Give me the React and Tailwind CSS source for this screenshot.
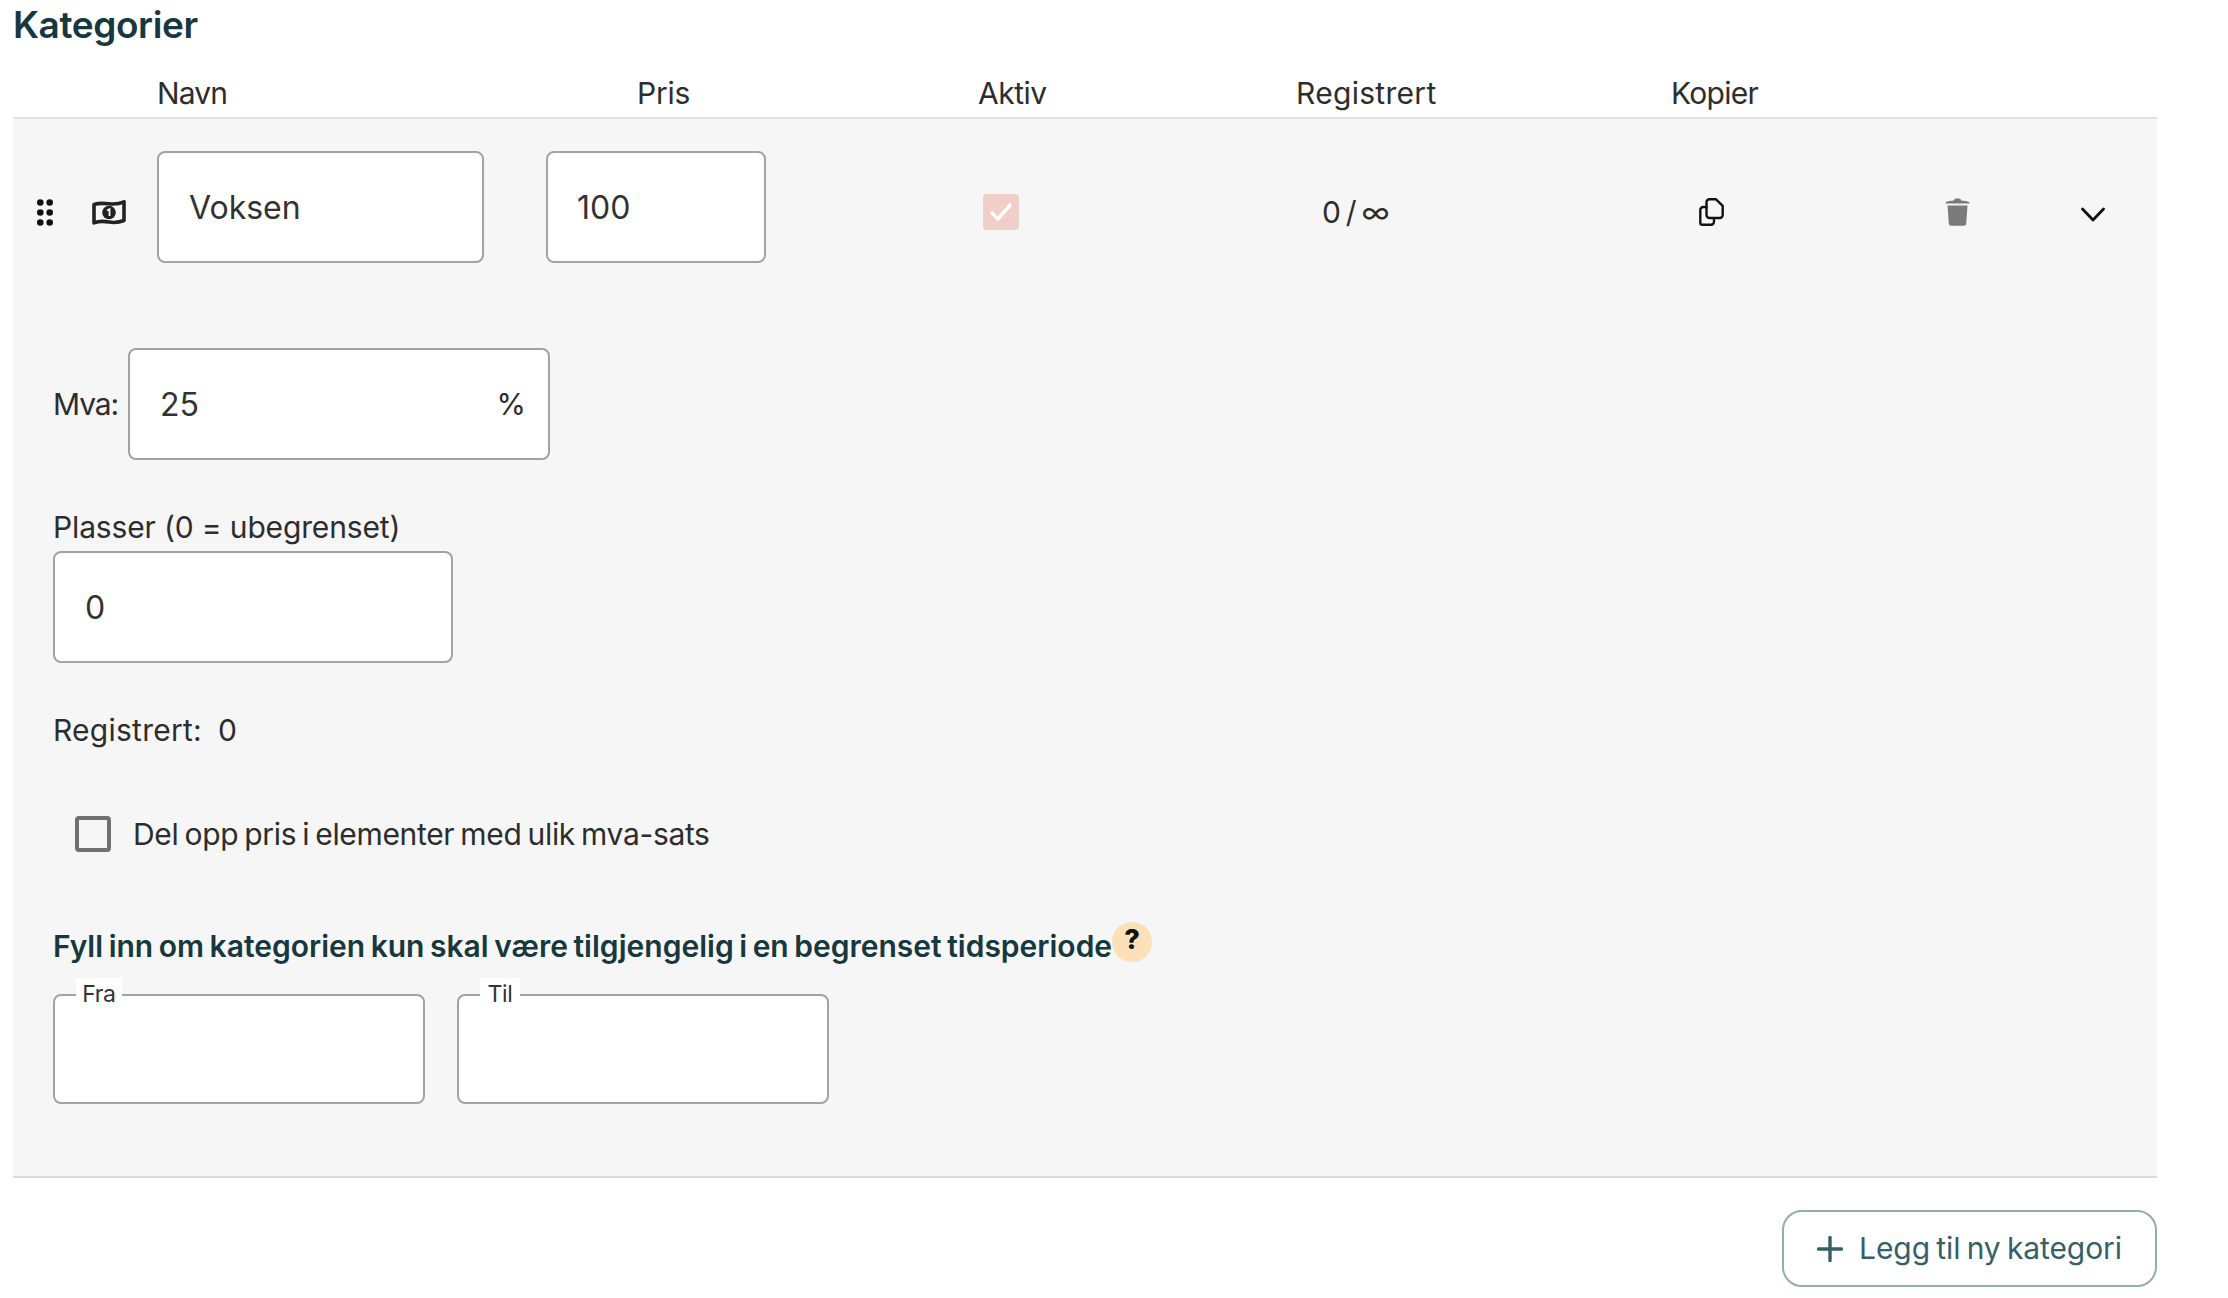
import React from "react";

const inputCls = "block h-[112px] rounded-[8px] border-2 border-[#a3a3a3] bg-white text-[32px] text-[#333] outline-none";

function Dots() {
  return (
    <svg width="16" height="27" viewBox="0 0 16 27" fill="#111">
      {[3.5, 13.5, 23.5].map((y) => (
        <g key={y}>
          <circle cx="3.3" cy={y} r="3.3" />
          <circle cx="12.7" cy={y} r="3.3" />
        </g>
      ))}
    </svg>
  );
}

function Bill() {
  return (
    <svg width="34" height="25" viewBox="0 0 34 25" fill="none">
      <path d="M2 4.500C7 2.800 12 3.200 17 3.800c5 .6 10 .2 15-2v18.700c-5 2-10 2.400-15 1.500-5-.9-10-1-15 .8z" stroke="#222" strokeWidth="3.600" strokeLinejoin="round" fill="#f6f6f6" />
      <circle cx="17" cy="12.500" r="6.800" fill="#222" />
      <path d="M15 10.500l2.500-1.300v6.800" stroke="#f6f6f6" strokeWidth="1.800" />
    </svg>
  );
}

function Copy() {
  return (
    <svg width="25" height="28" viewBox="0 0 25 28" fill="none" stroke="#111" strokeWidth="2.400" strokeLinejoin="round" strokeLinecap="round">
      <path d="M10.500 1.300h6.500l6.700 6.500v9.200a3 3 0 0 1-3 3h-10.200a3 3 0 0 1-3-3V4.300a3 3 0 0 1 3-3z" />
      <path d="M7.500 9H4.300a3 3 0 0 0-3 3v12.700a2 2 0 0 0 2 2h8.700a3 3 0 0 0 3-3v-3.500" />
    </svg>
  );
}

function Trash() {
  return (
    <svg width="25" height="28" viewBox="0 0 25 28" fill="#7a7a7a">
      <path d="M9 2.500C9 1 10 .5 12.500.5S16 1 16 2.500c3 .2 6 .7 8 1.500.8.400.8 1.500 0 1.500H1c-.8 0-.8-1.100 0-1.500 2-.8 5-1.300 8-1.500z" />
      <path d="M2.500 7.500h20l-1.300 18a2.300 2.300 0 0 1-2.300 2.200H6.100a2.300 2.300 0 0 1-2.300-2.200z" />
    </svg>
  );
}

function Chevron() {
  return (
    <svg width="24" height="15" viewBox="0 0 24 15" fill="none" stroke="#111" strokeWidth="2.800" strokeLinecap="round" strokeLinejoin="round">
      <path d="M1.500 2L12 13 22.500 2" />
    </svg>
  );
}

function Check() {
  return (
    <div className="flex h-[36px] w-[36px] items-center justify-center rounded-[4px] bg-[#efcfc8]">
      <svg width="26" height="22" viewBox="0 0 26 22" fill="none" stroke="#fff" strokeWidth="3.500">
        <path d="M3 11l7 7L23 3" />
      </svg>
    </div>
  );
}

function DateField({ label, labelW, className }) {
  return (
    <div className={"relative h-[110px] w-[372px] rounded-[8px] border-2 border-[#a3a3a3] bg-white " + className}>
      <span className={"absolute -top-[18px] left-[21px] h-[32px] bg-white text-center text-[23px] leading-[32px] tracking-[-0.4px] text-[#333] " + labelW}>{label}</span>
    </div>
  );
}

export default function App() {
  return (
    <div className="min-h-[1298px] bg-white pl-[13px] font-['Inter',sans-serif] text-[#2d2d2d]">
      <div className="w-[2144px]">
        <h2 className="h-[50px] text-[37px] leading-[50px] font-semibold tracking-[-0.4px] text-[#17383f]">Kategorier</h2>
        <div className="flex h-[69px] items-center border-b-2 border-[#e2e2e2] pt-[20px] pl-[144px] text-[30px]">
          <span className="w-[480px] tracking-[-0.9px]">Navn</span>
          <span className="w-[341px] tracking-[-0.2px]">Pris</span>
          <span className="w-[318px] tracking-[-0.5px]">Aktiv</span>
          <span className="w-[375px] tracking-[0.3px]">Registrert</span>
          <span className="tracking-[-0.7px]">Kopier</span>
        </div>
        <div className="h-[1059px] border-b-2 border-[#d9d9d9] bg-[#f6f6f6] pt-[32px]">
          <div className="flex items-center">
            <div className="mt-[11px] ml-[24px] flex"><Dots /></div>
            <div className="mt-[11px] ml-[39px] flex"><Bill /></div>
            <input readOnly value="Voksen" className={inputCls + " ml-[31px] w-[327px] pl-[30px]"} />
            <input readOnly value="100" className={inputCls + " ml-[62px] w-[220px] pl-[29px]"} />
            <div className="mt-[10px] ml-[217px]"><Check /></div>
            <span className="mt-[10px] ml-[303px] w-[70px] text-[30px] leading-[36px] tracking-[-0.3px] whitespace-nowrap [word-spacing:-3px]">0 / ∞</span>
            <div className="mt-[10px] ml-[307px] flex"><Copy /></div>
            <div className="mt-[10px] ml-[221px] flex"><Trash /></div>
            <div className="mt-[14px] ml-[111px] flex"><Chevron /></div>
          </div>

          <div className="mt-[85px] flex items-center pl-[40px]">
            <span className="w-[75px] text-[30px] tracking-[-1.1px]">Mva:</span>
            <div className="relative">
              <input readOnly value="25" className={inputCls + " w-[422px] pl-[30px]"} />
              <span className="absolute top-[38px] right-[24px] text-[30px] leading-[36px]">%</span>
            </div>
          </div>

          <div className="mt-[49px] pl-[40px] text-[30px] leading-[36px] tracking-[-0.15px]">Plasser (0 = ubegrenset)</div>
          <input readOnly value="0" className={inputCls + " mt-[6px] ml-[40px] w-[400px] pl-[30px]"} />

          <div className="mt-[49px] flex gap-[16px] pl-[40px] text-[30px] leading-[36px] tracking-[0.25px]">
            <span>Registrert:</span>
            <span>0</span>
          </div>

          <div className="mt-[68px] flex items-center pl-[62px]">
            <div className="h-[36px] w-[36px] rounded-[4px] border-[4px] border-[#707070]"></div>
            <span className="ml-[22px] text-[30px] leading-[36px] tracking-[-0.34px] [word-spacing:-2px]">Del opp pris i elementer med ulik mva-sats</span>
          </div>

          <div className="mt-[70px] flex items-start pl-[40px]">
            <span className="mt-[6px] text-[30px] leading-[36px] font-semibold tracking-[0px] text-[#17383f] [word-spacing:-2px]">Fyll inn om kategorien kun skal være tilgjengelig i en begrenset tidsperiode</span>
            <span className="flex h-[40px] w-[40px] items-center justify-center rounded-full bg-[#fbe0b8] pb-[3px] text-[27px] font-extrabold text-[#111]">?</span>
          </div>

          <div className="mt-[30px] flex pl-[40px]">
            <DateField label="Fra" labelW="w-[46px]" />
            <DateField label="Til" labelW="w-[40px]" className="ml-[32px]" />
          </div>
        </div>
        <div className="mt-[32px] flex justify-end">
          <button className="flex h-[77px] w-[375px] items-center justify-center gap-[16px] rounded-[20px] border-2 border-[#94adb2] bg-white text-[30px] tracking-[-0.1px] text-[#365f69] [word-spacing:-2px]">
            <svg width="26" height="26" viewBox="0 0 26 26" fill="none" stroke="#365f69" strokeWidth="3.400" strokeLinecap="round">
              <path d="M13 1.500v23M1.500 13h23" />
            </svg>
            Legg til ny kategori
          </button>
        </div>
      </div>
    </div>
  );
}
